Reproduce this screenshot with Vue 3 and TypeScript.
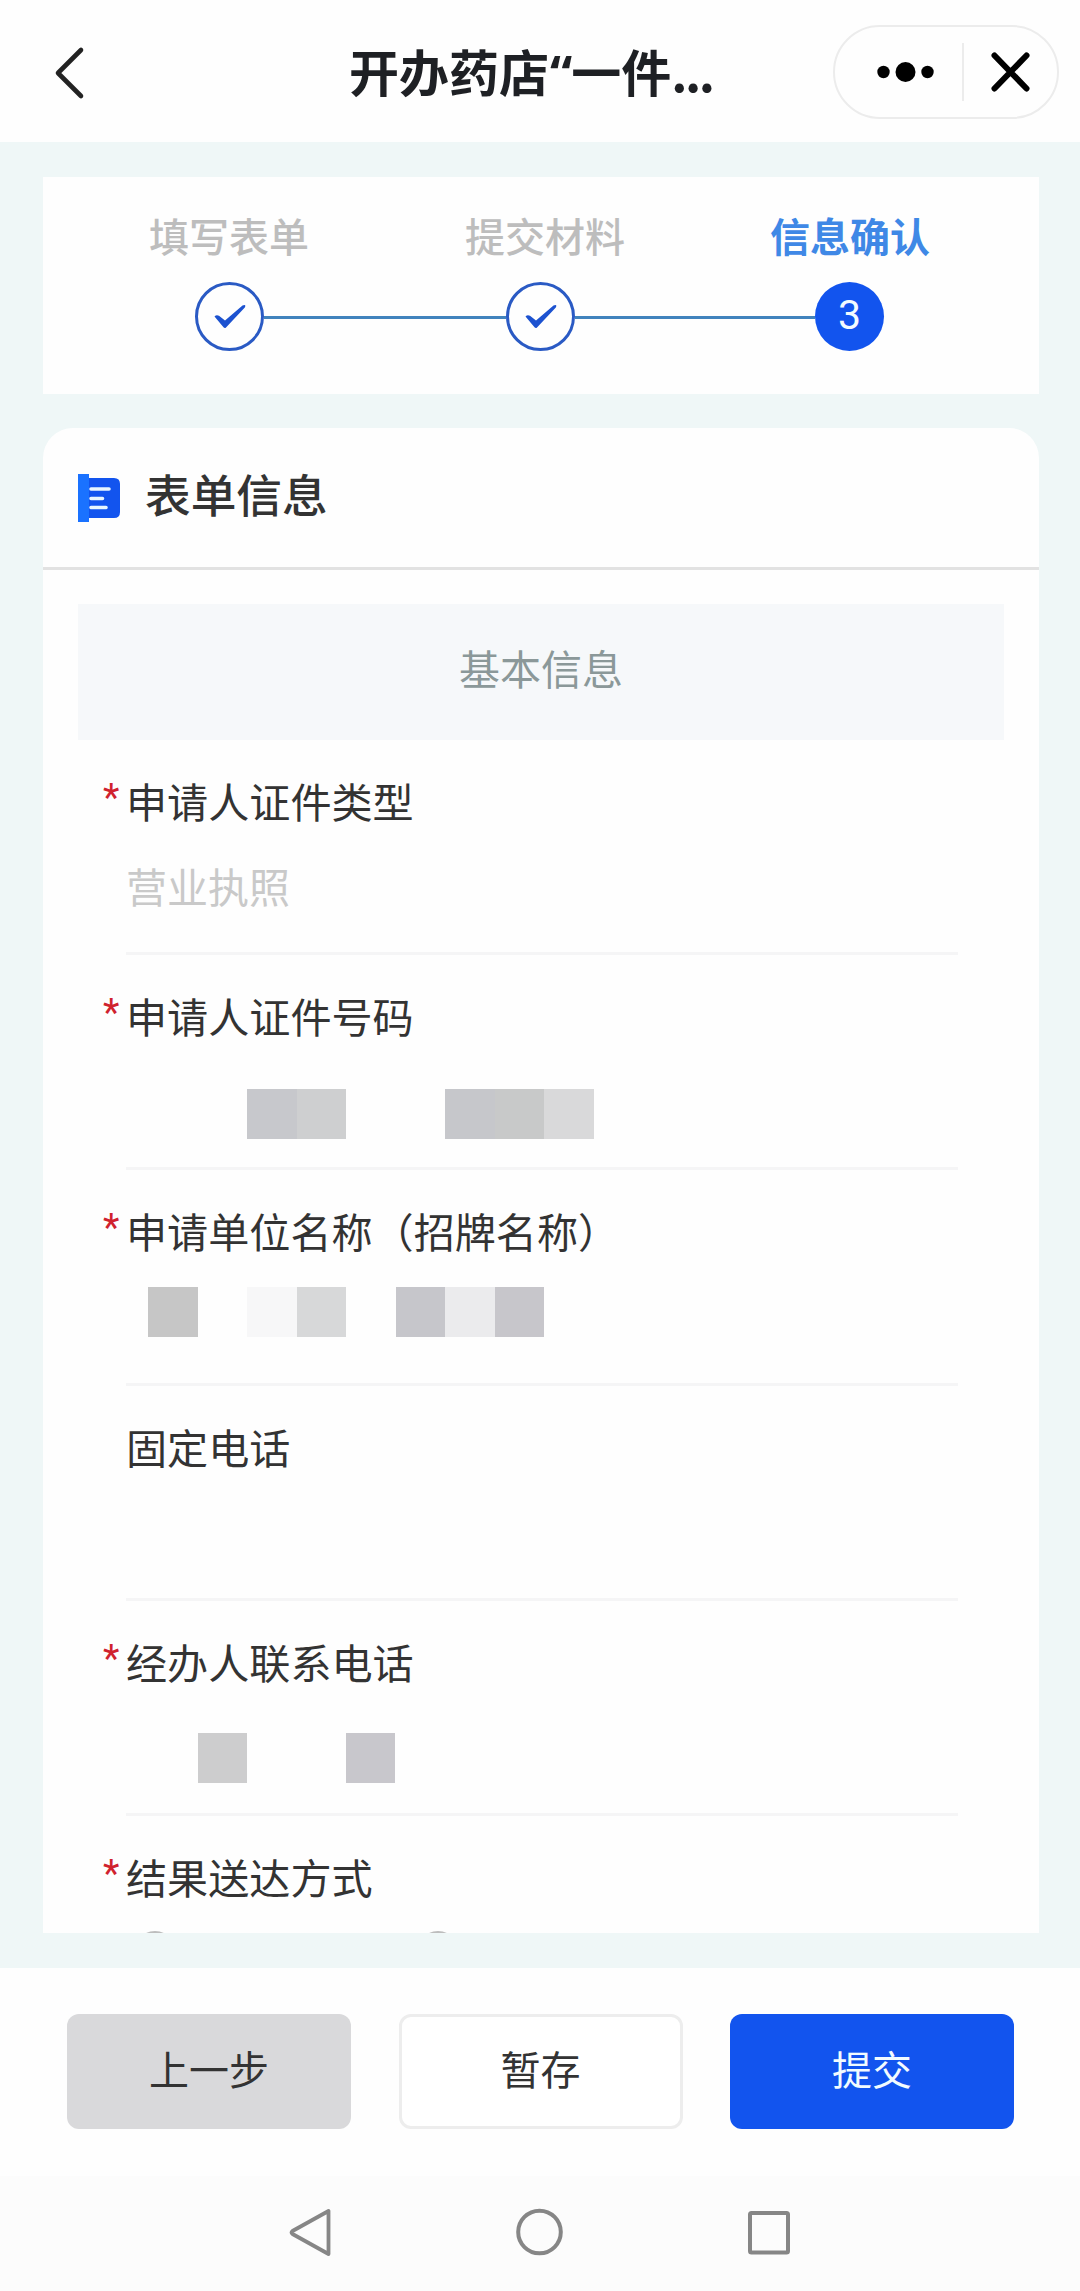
<script setup lang="ts">
interface Block {
  width: number
  gap: number
  color: string
}

interface Field {
  label: string
  required: boolean
  value?: string
  offset?: number
  blocks?: Block[]
  radios?: boolean
}

interface Step {
  title: string
  done: boolean
}

const steps: Step[] = [
  { title: '填写表单', done: true },
  { title: '提交材料', done: true },
  { title: '信息确认', done: false },
]

const fields: Field[] = [
  { label: '申请人证件类型', required: true, value: '营业执照' },
  {
    label: '申请人证件号码',
    required: true,
    offset: 44,
    blocks: [
      { gap: 121, width: 50, color: '#c7c8cc' },
      { gap: 0, width: 49, color: '#cecfd0' },
      { gap: 99, width: 50, color: '#c6c7cb' },
      { gap: 0, width: 49, color: '#c8c9c9' },
      { gap: 0, width: 50, color: '#d9d9da' },
    ],
  },
  {
    label: '申请单位名称（招牌名称）',
    required: true,
    offset: 27,
    blocks: [
      { gap: 22, width: 50, color: '#c6c6c6' },
      { gap: 49, width: 50, color: '#f7f7f8' },
      { gap: 0, width: 49, color: '#d7d8d9' },
      { gap: 50, width: 49, color: '#c6c6cb' },
      { gap: 0, width: 50, color: '#ebebed' },
      { gap: 0, width: 49, color: '#c7c6cb' },
    ],
  },
  { label: '固定电话', required: false },
  {
    label: '经办人联系电话',
    required: true,
    offset: 42,
    blocks: [
      { gap: 72, width: 49, color: '#cdcdce' },
      { gap: 99, width: 49, color: '#c8c7cc' },
    ],
  },
  { label: '结果送达方式', required: true, radios: true },
]
</script>

<template>
  <div class="page">
    <header class="header">
      <svg class="back" width="40" height="60" viewBox="0 0 40 60">
        <path d="M34 8 L11 31 L34 54" fill="none" stroke="#222" stroke-width="4.6" stroke-linecap="round" stroke-linejoin="round" />
      </svg>
      <h1 class="title">开办药店<span class="quote">“</span>一件<span class="dots">...</span></h1>
      <div class="capsule">
        <svg width="127" height="60" viewBox="0 0 127 60">
          <circle cx="48.5" cy="30" r="6.2" />
          <circle cx="70.5" cy="30" r="10" />
          <circle cx="92.5" cy="30" r="6.2" />
        </svg>
        <i class="split"></i>
        <svg width="92" height="60" viewBox="0 0 92 60">
          <path d="M30.5 13.5 L62.5 46.5 M62.5 13.5 L30.5 46.5" stroke="#000" stroke-width="6" stroke-linecap="round" />
        </svg>
      </div>
    </header>

    <main class="content">
      <section class="steps">
        <div class="step-titles">
          <span v-for="s in steps" :key="s.title" :class="{ current: !s.done }">{{ s.title }}</span>
        </div>
        <div class="track">
          <template v-for="(s, i) in steps" :key="s.title">
            <i v-if="i > 0" class="line"></i>
            <span class="node" :class="{ active: !s.done }">
              <svg v-if="s.done" width="34" height="28" viewBox="0 0 34 28">
                <path d="M1.5 13.5 Q3.5 11.2 6 12.8 L12 17.5 L29.5 2.5 Q33.5 1 31.8 4.5 L13 24.5 Q11.8 25.6 10.5 24.3 Z" fill="#1c52d0" />
              </svg>
              <template v-else>{{ i + 1 }}</template>
            </span>
          </template>
        </div>
      </section>

      <section class="card">
        <div class="card-head">
          <svg width="43" height="48" viewBox="0 0 43 48">
            <path d="M10 4 H36 Q42 4 42 10 V38 Q42 44 36 44 H10 Z" fill="#1254ee" />
            <rect width="11" height="48" fill="#1a72ff" />
            <path d="M13 15 H31 M13 24.5 H24.5 M13 33.5 H28" stroke="#e8f6ff" stroke-width="3.6" stroke-linecap="round" />
          </svg>
          <h2>表单信息</h2>
        </div>
        <div class="group">基本信息</div>
        <div v-for="f in fields" :key="f.label" class="field">
          <div class="label"><span class="star">{{ f.required ? '*' : '' }}</span>{{ f.label }}</div>
          <div v-if="f.value" class="value">{{ f.value }}</div>
          <div v-if="f.blocks" class="blocks" :style="{ marginTop: f.offset + 'px' }">
            <i v-for="(b, i) in f.blocks" :key="i" :style="{ width: b.width + 'px', marginLeft: b.gap + 'px', background: b.color }"></i>
          </div>
          <div v-if="f.radios" class="radios"><i></i><i></i></div>
        </div>
      </section>
    </main>

    <footer class="actions">
      <button class="prev">上一步</button>
      <button class="save">暂存</button>
      <button class="submit">提交</button>
    </footer>

    <nav class="nav">
      <svg width="46" height="52" viewBox="0 0 46 52">
        <path d="M40.5 5 V48 L4.5 28 Q2.5 26.5 4.5 25 Z" fill="none" stroke="#868686" stroke-width="3.8" stroke-linejoin="round" />
      </svg>
      <svg width="48" height="52" viewBox="0 0 48 52">
        <circle cx="23.5" cy="26" r="21.3" fill="none" stroke="#868686" stroke-width="4" />
      </svg>
      <svg width="44" height="52" viewBox="0 0 44 52">
        <rect x="4" y="7" width="38" height="39.5" rx="1.5" fill="none" stroke="#868686" stroke-width="4" />
      </svg>
    </nav>
  </div>
</template>

<style>
body {
  margin: 0;
  background: #fff;
}
</style>

<style scoped>
.page {
  width: 1080px;
  height: 2291px;
  display: flex;
  flex-direction: column;
  overflow: hidden;
  box-sizing: border-box;
  background: #fefefe;
  color: #333;
  font-family: "Noto Sans CJK SC", sans-serif;
}
.page * {
  box-sizing: border-box;
}
.page svg {
  display: block;
  flex: none;
}
.header {
  height: 142px;
  flex: none;
  display: flex;
  align-items: center;
  padding: 2px 21px 0 47px;
  background: #fefefe;
}
.title {
  margin: 0 0 0 262px;
  width: 484px;
  height: 74px;
  line-height: 70px;
  font-size: 50px;
  font-weight: 700;
  color: #1e2024;
  white-space: nowrap;
}
.quote {
  font-family: "Noto Sans", sans-serif;
  margin: 0 -1px 0 1px;
}
.dots {
  letter-spacing: -2.5px;
}
.capsule {
  width: 226px;
  height: 94px;
  border: 2px solid #ececec;
  border-radius: 47px;
  display: flex;
  align-items: center;
}
.split {
  width: 2px;
  height: 58px;
  flex: none;
  background: #ececec;
}
.content {
  height: 1826px;
  flex: none;
  padding: 35px 41px 35px 43px;
  display: flex;
  flex-direction: column;
  gap: 34px;
  background: #eff7f7;
}
.steps {
  height: 217px;
  flex: none;
  background: #fefefe;
}
.step-titles {
  display: flex;
  padding: 28px 0 0 106px;
  height: 105px;
  gap: 156px;
  line-height: 60px;
  font-size: 40px;
  font-weight: 500;
  color: #bdbdbd;
}
.step-titles .current {
  margin-left: -11px;
  color: #3f88e6;
  font-weight: 700;
}
.track {
  display: flex;
  align-items: center;
  padding-left: 152px;
}
.node {
  width: 69px;
  height: 69px;
  flex: none;
  border: 3px solid #2a5ac4;
  border-radius: 50%;
  display: flex;
  align-items: center;
  justify-content: center;
}
.node.active {
  border: 0;
  background: #1254ee;
  color: #f2fbff;
  font-family: Roboto, sans-serif;
  font-size: 41px;
  line-height: 69px;
  padding-bottom: 2px;
}
.line {
  width: 242px;
  height: 3px;
  margin-top: 2px;
  background: #4183bd;
}
.line + .node + .line {
  width: 240px;
}
.card {
  flex: 1;
  min-height: 0;
  overflow: hidden;
  border-radius: 30px 30px 0 0;
  background: #fefefe;
}
.card-head {
  height: 142px;
  display: flex;
  align-items: center;
  gap: 24px;
  padding: 0 0 0 35px;
  border-bottom: 3px solid #e2e2e2;
}
.card-head h2 {
  margin: 0;
  line-height: 66px;
  padding-bottom: 10px;
  font-size: 45.7px;
  font-weight: 500;
}
.group {
  height: 136px;
  margin: 34px 35px 0;
  line-height: 127px;
  text-align: center;
  font-size: 41px;
  color: #8b9899;
  background: #f6f8fa;
}
.field {
  height: 215.2px;
  margin: 0 81px 0 83px;
  padding-top: 30px;
  border-bottom: 3px solid #f5f5f6;
}
.label {
  display: flex;
  height: 60px;
  line-height: 60px;
  margin-left: -23px;
  font-size: 41.1px;
  white-space: nowrap;
}
.star {
  width: 23px;
  flex: none;
  color: #d0222e;
  font-family: Roboto, sans-serif;
  font-size: 38px;
  line-height: 57px;
}
.value {
  height: 60px;
  margin-top: 25px;
  line-height: 60px;
  font-size: 41px;
  color: #c9c9c9;
}
.blocks {
  display: flex;
  height: 50px;
}
.blocks i {
  flex: none;
}
.radios {
  display: flex;
  gap: 243px;
  padding: 25px 0 0 9px;
}
.radios i {
  width: 40px;
  height: 40px;
  border: 3px solid #bdbdbd;
  border-radius: 50%;
}
.actions {
  height: 208px;
  flex: none;
  display: flex;
  justify-content: space-between;
  padding: 46px 66px 0 67px;
  background: #fefefe;
}
.actions button {
  width: 284px;
  height: 115px;
  margin: 0;
  padding: 0 0 8px;
  border: 0;
  border-radius: 12px;
  font-family: inherit;
  font-size: 40px;
  line-height: 60px;
  color: #333;
}
.actions .prev {
  background: #d9d9db;
}
.actions .save {
  background: #fff;
  border: 3px solid #ededed;
}
.actions .submit {
  background: #1254ee;
  color: #f2fbff;
}
.nav {
  height: 115px;
  flex: none;
  display: flex;
  padding: 30px 0 0 288px;
  background: #fcfcfc;
}
.nav svg + svg {
  margin-left: 182px;
}
</style>
